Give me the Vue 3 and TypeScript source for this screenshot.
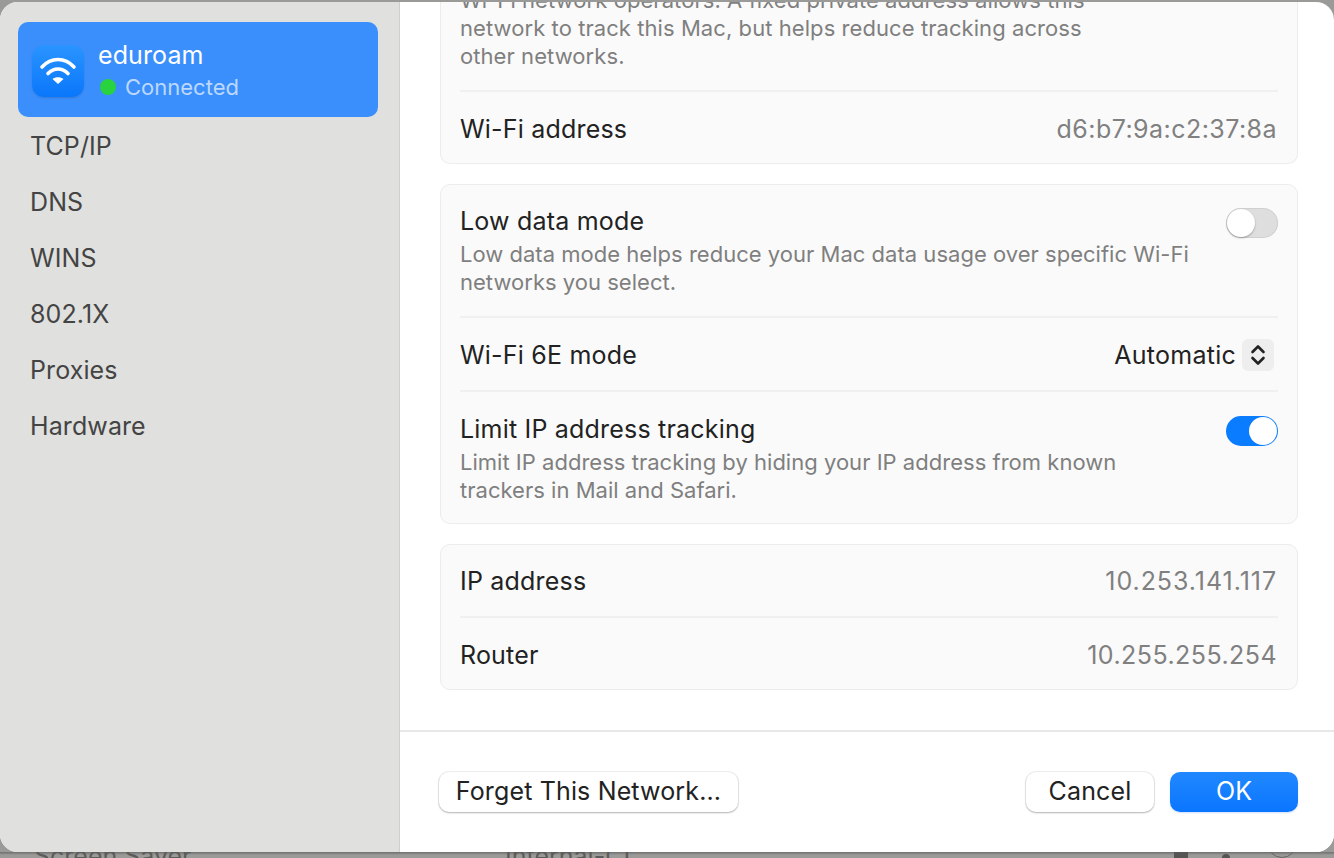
<template>
  <div class="desk">
    <div class="window">
      <aside class="sidebar">
        <div class="net-card">
          <div class="net-icon">
            <svg width="52" height="52" viewBox="0 0 52 52">
              <path d="M10 22C19 12 33 12 42 22" class="arc" />
              <path d="M16 28.5C22 22.5 30 22.5 36 28.5" class="arc" />
              <path d="M26 39L20.5 34C23.5 31.5 28.5 31.5 31.5 34Z" fill="#fff" />
            </svg>
          </div>
          <div class="net-text">
            <div class="net-name">eduroam</div>
            <div class="net-status"><span class="dot"></span>Connected</div>
          </div>
        </div>
        <nav class="nav">
          <div v-for="item in navItems" :key="item" class="nav-item">{{ item }}</div>
        </nav>
      </aside>
      <main class="main">
        <div class="scroll">
          <section class="card first">
            <div class="clip-desc">
              <p class="desc">Wi-Fi network operators. A fixed private address allows this network to track this Mac, but helps reduce tracking across other networks.</p>
            </div>
            <div class="row">
              <span class="label">Wi-Fi address</span>
              <span class="value">d6:b7:9a:c2:37:8a</span>
            </div>
          </section>
          <section class="card">
            <div class="row tall">
              <div class="row-text">
                <div class="label">Low data mode</div>
                <p class="desc">Low data mode helps reduce your Mac data usage over specific Wi-Fi networks you select.</p>
              </div>
              <span class="toggle"><span class="knob"></span></span>
            </div>
            <div class="row mode">
              <span class="label">Wi-Fi 6E mode</span>
              <span class="select">
                Automatic
                <span class="stepper">
                  <svg width="16" height="24" viewBox="0 0 16 24">
                    <path d="M2.5 9L8 3.5L13.5 9M2.5 15L8 20.5L13.5 15" />
                  </svg>
                </span>
              </span>
            </div>
            <div class="row tall">
              <div class="row-text">
                <div class="label">Limit IP address tracking</div>
                <p class="desc">Limit IP address tracking by hiding your IP address from known trackers in Mail and Safari.</p>
              </div>
              <span class="toggle on"><span class="knob"></span></span>
            </div>
          </section>
          <section class="card">
            <div v-for="r in addressRows" :key="r.label" class="row">
              <span class="label">{{ r.label }}</span>
              <span class="value">{{ r.value }}</span>
            </div>
          </section>
        </div>
        <footer class="footer">
          <button class="btn forget">Forget This Network...</button>
          <div class="actions">
            <button class="btn cancel">Cancel</button>
            <button class="btn ok">OK</button>
          </div>
        </footer>
      </main>
    </div>
    <div class="behind">
      <span class="behind-a">Screen Saver</span>
      <span class="behind-b">Internal-CL</span>
      <i class="behind-block"></i>
      <i class="behind-dot"></i>
      <i class="behind-ring"></i>
    </div>
  </div>
</template>

<script setup lang="ts">
const navItems: string[] = ['TCP/IP', 'DNS', 'WINS', '802.1X', 'Proxies', 'Hardware']

const addressRows: { label: string; value: string }[] = [
  { label: 'IP address', value: '10.253.141.117' },
  { label: 'Router', value: '10.255.255.254' },
]
</script>

<style>
html, body { margin: 0; background: #8f8d8b; overflow: hidden; }
</style>

<style scoped>
.desk { width: 1334px; height: 858px; display: flex; flex-direction: column; overflow: hidden; background: #9a9a98; font-family: Inter, "Noto Sans", sans-serif; color: #222; }
.window { height: 850px; margin-top: 2px; flex: none; display: flex; border-radius: 18px; overflow: hidden; background: #fff; position: relative; z-index: 1; }

.sidebar { flex: none; width: 360px; background: #e0e0de; border-right: 1px solid #cfcfcd; padding: 20px 21px 0 18px; }
.net-card { height: 95px; background: #3b8ffc; border-radius: 10px; display: flex; align-items: center; padding-left: 14px; }
.net-icon { width: 52px; height: 52px; margin-top: 3px; flex: none; border-radius: 12px; background: linear-gradient(#2a94ff, #0a77fb); box-shadow: 0 1px 2px rgba(0, 0, 0, .15); }
.arc { fill: none; stroke: #fff; stroke-width: 3.6; stroke-linecap: round; }
.net-text { margin-left: 14px; padding-top: 2px; }
.net-name { font-size: 25px; line-height: 30px; letter-spacing: .1px; color: #fff; }
.net-status { display: flex; align-items: center; font-size: 22px; line-height: 30px; color: #bcd8fd; margin-top: 2px; }
.dot { width: 16px; height: 16px; border-radius: 50%; background: #29d23f; margin: 0 9px 0 2px; }
.nav { padding: 1px 0 0 12px; }
.nav-item { height: 56px; line-height: 56px; font-size: 25px; letter-spacing: .1px; color: #444; }

.main { flex: 1; display: flex; flex-direction: column; min-width: 0; }
.scroll { height: 728px; flex: none; overflow: hidden; padding: 0 36px 0 40px; border-bottom: 2px solid #e8e8e8; display: flex; flex-direction: column; gap: 20px; }
.card { background: #fafafa; border: 1px solid #ececec; border-radius: 10px; padding: 0 19px; flex: none; }
.first { border-top: none; border-radius: 0 0 10px 10px; }
.clip-desc { height: 88px; display: flex; align-items: flex-end; overflow: hidden; padding-bottom: 20px; box-sizing: border-box; }
.row { min-height: 73px; padding-top: 2px; display: flex; align-items: center; justify-content: space-between; border-top: 2px solid #f0f0f0; box-sizing: border-box; }
.card > .row:first-child { border-top: none; min-height: 71px; padding-top: 0; }
.row.mode { min-height: 74px; }
.row.tall { align-items: flex-start; padding: 21px 0 19px; }
.card > .row.tall:first-child { padding: 20px 0; }
.label { font-size: 25px; line-height: 32px; letter-spacing: .2px; color: #222; }
.value { font-size: 25px; letter-spacing: .45px; color: #808080; padding-right: 1px; }
.card > .row:first-child .value { letter-spacing: .95px; }
.desc { margin: 3px 0 0; font-size: 22px; line-height: 28px; letter-spacing: .02px; color: #7f7f7f; }
.clip-desc .desc { margin: 0; width: 650px; flex: none; letter-spacing: .07px; }
.row-text { width: 740px; }
.toggle { width: 52px; height: 30px; border-radius: 15px; background: #dedede; position: relative; flex: none; margin-top: 3px; box-shadow: inset 0 0 0 1px #d0d0d0; }
.knob { position: absolute; left: 1px; top: 1px; width: 28px; height: 28px; border-radius: 50%; background: #fff; box-shadow: 0 1px 2px rgba(0, 0, 0, .3); }
.toggle.on { background: #0a7cff; box-shadow: none; }
.toggle.on .knob { left: 23px; box-shadow: none; }
.select { display: flex; align-items: center; font-size: 25px; letter-spacing: .25px; color: #222; gap: 6px; padding-right: 4px; }
.stepper { width: 32px; height: 32px; background: #eee; border-radius: 6px; display: flex; align-items: center; justify-content: center; }
.stepper path { fill: none; stroke: #222; stroke-width: 2.6; stroke-linecap: round; stroke-linejoin: round; }

.footer { flex: 1; display: flex; align-items: flex-start; justify-content: space-between; padding: 40px 36px 0 39px; background: #fff; }
.actions { display: flex; gap: 16px; }
.btn { height: 40px; border: none; border-radius: 10px; background: #fff; font-family: inherit; font-size: 25px; letter-spacing: .15px; color: #222; box-shadow: 0 0 0 1px rgba(0, 0, 0, .06), 0 1px 2px rgba(0, 0, 0, .25); padding: 0 0 2px; }
.forget { width: 299px; }
.cancel { width: 128px; }
.ok { width: 128px; background: linear-gradient(#2188ff, #0a76ff); color: #fff; box-shadow: 0 1px 2px rgba(0, 90, 255, .2); }

.behind { flex: 1; position: relative; overflow: hidden; color: #5c5c5a; font-size: 25px; background: linear-gradient(#6e6e6c, #9a9a98 3px); }
.behind span { position: absolute; top: -11px; white-space: nowrap; }
.behind-a { left: 34px; }
.behind-b { left: 505px; }
.behind-block { position: absolute; left: 1174px; top: 0; width: 14px; height: 6px; background: #555; }
.behind-dot { position: absolute; left: 1222px; top: 2px; width: 8px; height: 8px; border-radius: 50%; background: #555; }
.behind-ring { position: absolute; left: 1267px; top: -24px; width: 28px; height: 28px; border: 1px solid #666; border-radius: 50%; }
</style>
